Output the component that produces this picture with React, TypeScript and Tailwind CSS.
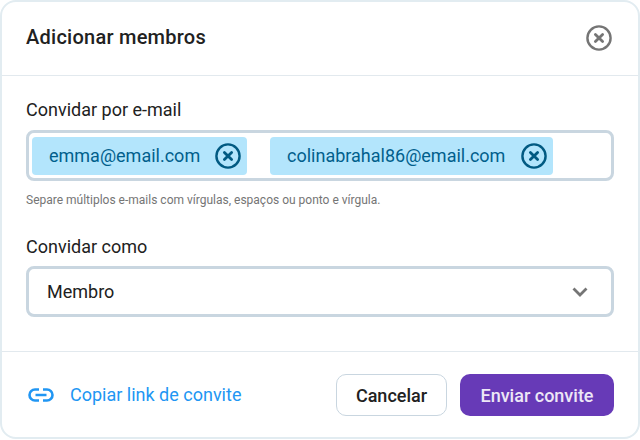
function XCircle({ className }: { className: string }) {
  return (
    <svg viewBox="0 0 26 26" className={className} fill="none" stroke="currentColor">
      <circle cx="13" cy="13" r="11.6" strokeWidth="2.4" />
      <path d="M9.4 9.4l7.2 7.2M16.6 9.4l-7.2 7.2" strokeWidth="2.8" strokeLinecap="round" />
    </svg>
  );
}

function Chip({ text, className }: { text: string; className: string }) {
  return (
    <div className={`flex h-[38px] items-center rounded-[4px] bg-[#b3e5fc] text-[18px] text-[#015f8c] ${className}`}>
      <span className="flex-1">{text}</span>
      <XCircle className="h-[26px] w-[26px] text-[#015a82]" />
    </div>
  );
}

export default function App() {
  return (
    <div className="h-[440px] w-[640px] bg-white font-['Roboto',sans-serif] text-[#212121]">
      <div className="flex h-[439px] w-[640px] flex-col rounded-[16px] border-2 border-[#e2ecf1] bg-white">
        <div className="flex h-[74px] shrink-0 items-center justify-between border-b border-[#e2e9ee] pl-[24px] pr-[26px]">
          <h1 className="mb-[3px] text-[20px] font-medium tracking-[0.25px]">Adicionar membros</h1>
          <XCircle className="mb-[1px] h-[26px] w-[26px] text-[#757575]" />
        </div>
        <div className="flex h-[276px] shrink-0 flex-col border-b border-[#e2e9ee] px-[24px]">
          <label className="mt-[24px] text-[18px] leading-[20px]">Convidar por e-mail</label>
          <div className="mt-[10px] flex h-[51px] items-center rounded-[8px] border-[3px] border-[#c9d6e0] pl-[3px]">
            <Chip text="emma@email.com" className="w-[215px] pl-[17px] pr-[6px]" />
            <Chip text="colinabrahal86@email.com" className="ml-[23px] w-[283px] pl-[17px] pr-[6px]" />
          </div>
          <p className="mt-[12px] text-[12px] leading-[14px] text-[#757575]">
            Separe múltiplos e-mails com vírgulas, espaços ou ponto e vírgula.
          </p>
          <label className="mt-[30px] text-[18px] leading-[20px]">Convidar como</label>
          <div className="mt-[9px] flex h-[51px] items-center justify-between rounded-[8px] border-[3px] border-[#c9d6e0] pl-[18px] pr-[23px]">
            <span className="text-[18px]">Membro</span>
            <svg viewBox="0 0 16 10" className="h-[10px] w-[16px] text-[#757575]" fill="none" stroke="currentColor">
              <path d="M1.5 1.5L8 8l6.5-6.5" strokeWidth="2.8" />
            </svg>
          </div>
        </div>
        <div className="flex flex-1 items-start justify-between pl-[26px] pr-[24px] pt-[22px]">
          <div className="flex h-[42px] items-center">
            <svg viewBox="0 0 26 14" className="h-[14px] w-[26px] text-[#2196f3]" fill="none" stroke="currentColor">
              <path d="M11 1.5H7a5.5 5.5 0 0 0 0 11h4M15 1.5h4a5.5 5.5 0 0 1 0 11h-4M7.5 7h11" strokeWidth="2.6" />
            </svg>
            <span className="mb-[1px] ml-[16px] text-[18px] text-[#2196f3]">Copiar link de convite</span>
          </div>
          <div className="flex gap-[13px]">
            <button className="h-[42px] w-[111px] rounded-[10px] border border-[#c9d6e0] bg-white text-[18px] font-medium text-[#212121]">
              Cancelar
            </button>
            <button className="h-[42px] w-[154px] rounded-[10px] bg-[#673ab7] text-[18px] font-medium text-[#ede7f6]">
              Enviar convite
            </button>
          </div>
        </div>
      </div>
    </div>
  );
}
